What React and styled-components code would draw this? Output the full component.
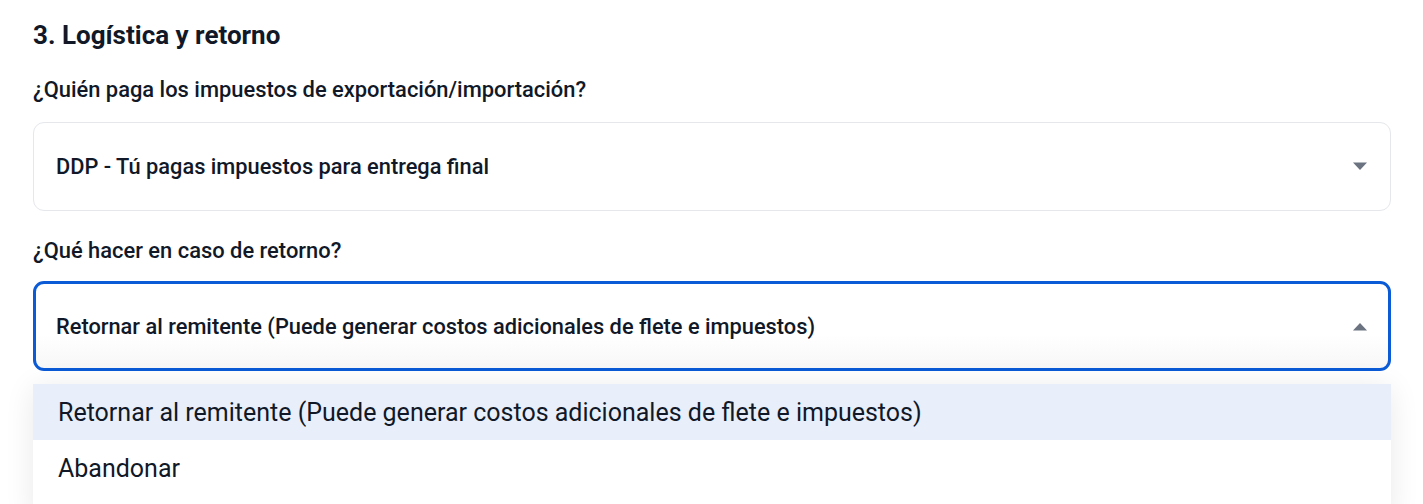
import React from "react";
import styled, { createGlobalStyle } from "styled-components";

const GlobalStyle = createGlobalStyle`
  body {
    margin: 0;
    background: #ffffff;
    font-family: Roboto, "Noto Sans", sans-serif;
    color: #111827;
  }
`;

const returnOptions = [
  "Retornar al remitente (Puede generar costos adicionales de flete e impuestos)",
  "Abandonar",
];

const Caret = ({ up }) => (
  <CaretSvg width="16" height="9" viewBox="0 0 16 9">
    {up ? <path d="M1 8.5 L8 1 L15 8.5 Z" /> : <path d="M1 0.5 L15 0.5 L8 8 Z" />}
  </CaretSvg>
);

const App = () => {
  const selected = returnOptions[0];

  return (
    <>
      <GlobalStyle />
      <Section>
        <Title>3. Logística y retorno</Title>

        <Field>
          <Label>¿Quién paga los impuestos de exportación/importación?</Label>
          <SelectBox>
            <SelectValue>DDP - Tú pagas impuestos para entrega final</SelectValue>
            <Caret />
          </SelectBox>
        </Field>

        <Field $second>
          <Label>¿Qué hacer en caso de retorno?</Label>
          <SelectWrap>
            <SelectBox $focused>
              <SelectValue>{selected}</SelectValue>
              <Caret up />
            </SelectBox>
            <Menu>
              {returnOptions.map((opt) => (
                <MenuItem key={opt} $active={opt === selected}>
                  {opt}
                </MenuItem>
              ))}
            </Menu>
          </SelectWrap>
        </Field>
      </Section>
    </>
  );
};

export default App;

/* ---------------- Styled Components ---------------- */
const Section = styled.div`
  padding: 16px 32px 0 33px;
  display: flex;
  flex-direction: column;
`;

const Title = styled.h2`
  margin: 0;
  font-size: 26px;
  line-height: 38px;
  font-weight: 700;
  color: #111827;
`;

const Field = styled.div`
  display: flex;
  flex-direction: column;
  gap: ${(p) => (p.$second ? "16px" : "18px")};
  margin-top: ${(p) => (p.$second ? "26px" : "22px")};
`;

const Label = styled.label`
  font-size: 21.9px;
  line-height: 28px;
  font-weight: 500;
  color: #111827;
`;

const SelectWrap = styled.div`
  display: flex;
  flex-direction: column;
  gap: 13px;
`;

const SelectBox = styled.div`
  position: relative;
  z-index: 1;
  height: ${(p) => (p.$focused ? "90px" : "89px")};
  box-sizing: border-box;
  display: flex;
  align-items: center;
  justify-content: space-between;
  padding: 0 ${(p) => (p.$focused ? "20px" : "22px")};
  border: ${(p) => (p.$focused ? "3px solid #0b5ad6" : "1px solid #e5e7eb")};
  border-radius: 11px;
  background: ${(p) =>
    p.$focused ? "linear-gradient(#ffffff 60%, #f7f7f8)" : "#ffffff"};
`;

const SelectValue = styled.span`
  font-size: 21.8px;
  font-weight: 500;
  color: #111827;
`;

const CaretSvg = styled.svg`
  fill: #6b7280;
`;

const Menu = styled.div`
  position: relative;
  z-index: 2;
  padding-bottom: 24px;
  background: #ffffff;
  border-radius: 0 0 8px 8px;
  box-shadow: 0 4px 30px rgba(0, 0, 0, 0.09);
  overflow: hidden;
`;

const MenuItem = styled.div`
  height: 56px;
  display: flex;
  align-items: center;
  padding: 0 25px;
  font-size: 25px;
  color: #111827;
  background: ${(p) => (p.$active ? "#e8effb" : "#ffffff")};
`;
